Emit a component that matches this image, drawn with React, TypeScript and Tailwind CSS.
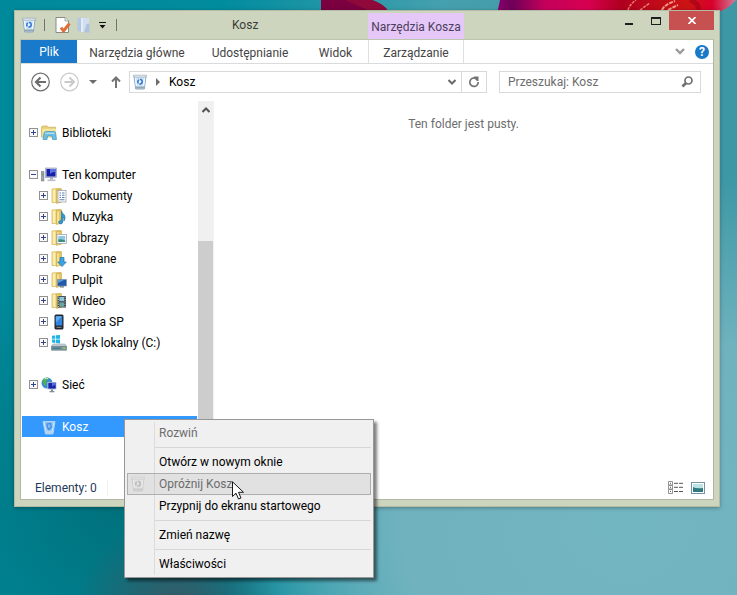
import { useState } from "react";
import type { ReactNode } from "react";
import clsx from "clsx";

type TreeItem = {
  name: string;
  icon: ReactNode;
  level: number;
  open?: boolean;
  selected?: boolean;
  gap?: boolean;
};

function BinIcon({ faded = false }: { faded?: boolean }) {
  return (
    <svg width="16" height="16" viewBox="0 0 16 16" className={clsx("shrink-0", faded && "opacity-35 grayscale")}>
      <path d="M2 2.500 L14 2.500 L12.300 15 L3.700 15 Z" fill="#cfe2f1" stroke="#86a3ba" strokeWidth="0.900" />
      <path d="M3.700 12.500 L12.300 12.500 L12 14.600 L4 14.600 Z" fill="#93a9b8" />
      <path d="M3.400 4 L4.400 12 M12.600 4 L11.600 12" stroke="#f3f9fd" strokeWidth="1.200" />
      <path d="M1.500 1.200 L14.500 1.200 L14.200 3 L1.800 3 Z" fill="#f7fbfd" stroke="#8fa5b5" strokeWidth="0.700" />
      <circle cx="8" cy="7.800" r="2.200" fill="#e6f1fb" stroke="#2d74d6" strokeWidth="1.500" strokeDasharray="3.700 0.900" />
    </svg>
  );
}

function SelectedBinIcon() {
  return (
    <svg width="16" height="16" viewBox="0 0 16 16" className="shrink-0">
      <path d="M2 2.500 L14 2.500 L12 15 L4.500 15 Z" fill="#8fc3f3" stroke="#bcdcf8" strokeWidth="0.800" />
      <path d="M3 3 L5.500 14 M13 3 L10.800 14" stroke="#cfe6fa" strokeWidth="1" />
      <path d="M6 5 L9.500 4.500 L10.500 8 L8 10.500 L6.500 8.500 Z" fill="#7db8f0" stroke="#3d8ee6" strokeWidth="1.200" />
      <path d="M5 12 L11.300 12 L11 14.500 L5.400 14.500 Z" fill="#b9d3ea" />
    </svg>
  );
}

function Folder({ children }: { children?: ReactNode }) {
  return (
    <svg width="16" height="16" viewBox="0 0 16 16" className="shrink-0">
      <path d="M1 1 L9.500 0.500 L10 14 L1 14.500 Z" fill="#f1d87e" stroke="#cfae4c" strokeWidth="0.700" />
      <path d="M5.500 1.500 L10.500 0.800 L10.500 14 L5.500 15.500 Z" fill="#e5c766" stroke="#c9a847" strokeWidth="0.600" />
      <path d="M3 1.500 L3 14" stroke="#fbeeb5" strokeWidth="2.400" />
      <path d="M7 2.500 L7 14.500" stroke="#f8e7a0" strokeWidth="1.600" />
      {children}
    </svg>
  );
}

function LibrariesIcon() {
  return (
    <svg width="16" height="16" viewBox="0 0 16 16" className="shrink-0">
      <path d="M0.500 2 L1.500 1 L6 1 L7 2.200 L14.500 2.200 L14.500 12 L0.500 12 Z" fill="#e6cf7e" stroke="#c9ad54" strokeWidth="0.700" />
      <path d="M1 3.800 L15 3.800 L14.500 12.500 L1.500 12.500 Z" fill="#f5e59d" />
      <path d="M2 14.500 L3 8.500 Q3.300 6.500 5 6.500 L13 6.500 Q14.500 6.500 14.700 8.500 L15.500 14.500 L11.500 14.500 L11 11 L6.500 11 L6 14.500 Z" fill="#6dbfe2" stroke="#3f94bd" strokeWidth="0.700" />
      <path d="M4 8.200 L13.500 8.200" stroke="#c9ecf8" strokeWidth="1" />
    </svg>
  );
}

function ComputerIcon() {
  return (
    <svg width="16" height="16" viewBox="0 0 16 16" className="shrink-0">
      <rect x="0.300" y="4.500" width="2.700" height="9.500" fill="#9da3a8" stroke="#777d84" strokeWidth="0.500" />
      <rect x="1" y="6.500" width="1.200" height="2" fill="#57b847" />
      <rect x="4.500" y="1" width="11" height="9.500" fill="#c8cbe0" stroke="#8d91b0" strokeWidth="0.600" />
      <rect x="5.500" y="2" width="9" height="7.500" fill="#1420a8" />
      <path d="M9 2 L14.500 2 L14.500 5 Q11 4.500 9 7 Z" fill="#5b72e6" />
      <rect x="9" y="10.500" width="3" height="2" fill="#a5a9bb" />
      <rect x="6.500" y="12.500" width="8" height="1.600" fill="#b9bccb" />
    </svg>
  );
}

function NetworkIcon() {
  return (
    <svg width="16" height="16" viewBox="0 0 16 16" className="shrink-0">
      <circle cx="6" cy="6" r="5.500" fill="#3b8fd0" />
      <path d="M1 4 Q3 0.500 6.500 0.600 L8 2 L5 4.500 L6 6.500 L3.500 9 L2.500 6 Z" fill="#4fae5b" />
      <path d="M3.500 2 Q5 1 7 1.500" stroke="#d2f0d5" strokeWidth="1" fill="none" />
      <rect x="6.500" y="5" width="9" height="7.500" fill="#c3c8df" />
      <rect x="7.300" y="5.800" width="7.400" height="5.800" fill="#1724a6" />
      <path d="M11 5.800 L14.700 5.800 L14.700 8 Q12 8 11 10 Z" fill="#556ee0" />
      <rect x="10" y="12.500" width="2" height="1.500" fill="#7c819b" />
      <rect x="8.500" y="14" width="5" height="1.300" fill="#7a9a9c" />
    </svg>
  );
}

function PhoneIcon() {
  return (
    <svg width="16" height="16" viewBox="0 0 16 16" className="shrink-0">
      <rect x="3.500" y="0.500" width="9" height="15" rx="1.500" fill="#22262c" />
      <rect x="4.800" y="2.200" width="6.400" height="9.300" fill="#2e86e0" />
      <path d="M4.800 2.200 L11.200 2.200 L4.800 8.500 Z" fill="#61acf0" />
      <path d="M5.500 13.300 L10.500 13.300" stroke="#8d949c" strokeWidth="1" />
    </svg>
  );
}

function DiskIcon() {
  return (
    <svg width="16" height="16" viewBox="0 0 16 16" className="shrink-0">
      <path d="M1 0.800 L4.300 0.400 L4.300 3.800 L1 3.800 Z M5 0.300 L9 0 L9 3.800 L5 3.800 Z M1 4.500 L4.300 4.500 L4.300 8 L1 7.600 Z M5 4.500 L9 4.500 L9 8.500 L5 8 Z" fill="#1fb4e4" />
      <path d="M2 9 L14 9 L15.700 11.500 L0.300 11.500 Z" fill="#c9d2d8" stroke="#8b979f" strokeWidth="0.500" />
      <rect x="0.300" y="11.300" width="15.400" height="4" rx="0.500" fill="#7d929c" stroke="#5e727c" strokeWidth="0.500" />
      <path d="M1.500 13.300 L9.500 13.300" stroke="#3f7f93" strokeWidth="1.400" />
      <rect x="12" y="12.500" width="2.400" height="1.500" fill="#7be04c" />
    </svg>
  );
}

const tree: TreeItem[] = [
  { name: "Biblioteki", level: 0, icon: <LibrariesIcon /> },
  { name: "Ten komputer", level: 0, open: true, gap: true, icon: <ComputerIcon /> },
  {
    name: "Dokumenty",
    level: 1,
    icon: (
      <Folder>
        <rect x="7" y="2.500" width="8" height="11.500" fill="#fff" stroke="#8798a8" strokeWidth="0.700" />
        <path d="M8.500 5 H10 M11 5 H13.500 M8.500 7.200 H10 M11 7.200 H13.500 M8.500 9.500 H10 M11 9.500 H13.500 M8.500 11.800 H13.500" stroke="#557fae" strokeWidth="1.100" />
      </Folder>
    ),
  },
  {
    name: "Muzyka",
    level: 1,
    icon: (
      <Folder>
        <path d="M10.500 2 Q11 4.500 13.500 6 Q15 9 13 12 Q13.300 9 11.900 8 L11.900 13 Q11.500 15.500 8.500 14.800 Q6.500 13 8.700 11.800 L10.300 11.600 Z" fill="#2f9bd2" stroke="#1f6f9f" strokeWidth="0.600" />
      </Folder>
    ),
  },
  {
    name: "Obrazy",
    level: 1,
    icon: (
      <Folder>
        <rect x="6" y="4.500" width="9.500" height="9" fill="#fff" stroke="#8b9ba8" strokeWidth="0.700" />
        <rect x="7.300" y="6" width="6.900" height="6" fill="#8cc8e2" />
        <path d="M7.300 12 L7.300 9.500 Q10 8.500 14.200 10.500 L14.200 12 Z" fill="#3d8f79" />
      </Folder>
    ),
  },
  {
    name: "Pobrane",
    level: 1,
    icon: (
      <Folder>
        <path d="M9 6.500 L13 6.500 L13 11 L15.300 11 L11 15.600 L6.700 11 L9 11 Z" fill="#3ea4e0" stroke="#1e71b0" strokeWidth="0.700" />
      </Folder>
    ),
  },
  {
    name: "Pulpit",
    level: 1,
    icon: (
      <Folder>
        <rect x="6.500" y="7.500" width="9" height="6.500" fill="#2358a8" stroke="#7e93b3" strokeWidth="0.600" />
        <path d="M7 8 L13 8 L7 11 Z" fill="#5f9ce2" />
        <rect x="9" y="14.300" width="4" height="1.200" fill="#66758a" />
      </Folder>
    ),
  },
  {
    name: "Wideo",
    level: 1,
    icon: (
      <Folder>
        <rect x="6.500" y="3" width="8.500" height="11.500" fill="#343a41" />
        <rect x="8.300" y="3.800" width="4.900" height="4.500" fill="#8ec3d8" />
        <rect x="8.300" y="9.300" width="4.900" height="4.500" fill="#6aa6a0" />
        <path d="M7.400 3.500 V14 M14.100 3.500 V14" stroke="#d7dde2" strokeWidth="0.900" strokeDasharray="1.200 1.200" />
      </Folder>
    ),
  },
  { name: "Xperia SP", level: 1, icon: <PhoneIcon /> },
  { name: "Dysk lokalny (C:)", level: 1, icon: <DiskIcon /> },
  { name: "Sieć", level: 0, gap: true, icon: <NetworkIcon /> },
  { name: "Kosz", level: 0, gap: true, selected: true, icon: <SelectedBinIcon /> },
];

const menuGroups = [
  [{ label: "Rozwiń", disabled: true }],
  [
    { label: "Otwórz w nowym oknie" },
    { label: "Opróżnij Kosz", disabled: true, active: true },
    { label: "Przypnij do ekranu startowego" },
  ],
  [{ label: "Zmień nazwę" }],
  [{ label: "Właściwości" }],
];

function Wallpaper() {
  return (
    <svg className="absolute top-0 right-0" width="420" height="24" viewBox="317 0 420 24" aria-hidden="true">
      <defs>
        <linearGradient id="petal" x1="0" x2="1">
          <stop offset="0" stopColor="#8a0070" />
          <stop offset="0.060" stopColor="#6d0058" />
          <stop offset="0.200" stopColor="#c4005c" />
          <stop offset="0.380" stopColor="#d80050" />
          <stop offset="0.520" stopColor="#b00020" />
          <stop offset="0.800" stopColor="#cc1414" />
          <stop offset="0.900" stopColor="#d8002c" />
          <stop offset="1" stopColor="#cf7c98" />
        </linearGradient>
      </defs>
      <path d="M321 0 H372 Q384 4 389 12 H321 Z" fill="#7a0040" />
      <path d="M345 0 H372 Q384 4 389 12 H372 Z" fill="#8f0a3a" />
      <path d="M500 0 H736 Q728 10 712 14 H497 Z" fill="url(#petal)" />
      <path d="M628 10 Q630 4 636 0 M640 10 L650 3" stroke="#f0806c" strokeWidth="1.500" fill="none" strokeDasharray="3 1" />
      <path d="M662 10 Q664 5 675 1 M668 10 L678 5" stroke="#f59a86" strokeWidth="2" fill="none" strokeDasharray="4 1" />
      <path d="M690 0 Q700 4 698 10" stroke="#a00018" strokeWidth="5" fill="none" opacity="0.600" />
    </svg>
  );
}

function TitleBar() {
  return (
    <header className="flex h-7 items-start">
      <div className="flex h-full w-[348px] items-center pl-px">
        <BinIcon />
        <span className="ml-[7px] h-3 w-px bg-[#6f7468]" />
        <button aria-label="Właściwości" className="ml-[10px]">
          <svg width="16" height="16" viewBox="0 0 16 16">
            <path d="M1 0.500 H10 L13.500 4 V15.500 H1 Z" fill="#fff" stroke="#7d817c" strokeWidth="0.900" />
            <path d="M10 0.500 V4 H13.500" fill="#e5e8e8" stroke="#8b8f8a" strokeWidth="0.700" />
            <path d="M6 10.500 L8.500 14 L14.500 6.500" fill="none" stroke="#e0703a" strokeWidth="3" />
          </svg>
        </button>
        <button aria-label="Nowy folder" className="ml-[6px]">
          <svg width="14" height="16" viewBox="0 0 14 16">
            <path d="M0.500 1 L5 0.500 L5 15 L0.500 14 Z" fill="#b4c8e3" />
            <path d="M4 1 L12 1 L12 15 L4 15 Z" fill="#d0def0" />
            <path d="M9.500 7 L12.500 6.500 L12.500 15.500 L7 15.500 Z" fill="#aec3e0" />
            <path d="M5 1 V15" stroke="#f0f6fb" strokeWidth="1.200" />
          </svg>
        </button>
        <button aria-label="Dostosuj pasek narzędzi Szybki dostęp" className="ml-[8px]">
          <svg width="7" height="7" viewBox="0 0 7 7">
            <path d="M0 0 H7 V1 H0 Z M0.500 3 H6.500 L3.500 6.500 Z" fill="#111" />
          </svg>
        </button>
        <span className="ml-[10px] h-3 w-px bg-[#6f7468]" />
        <h1 className="ml-[115px] text-[#3b3d38]">Kosz</h1>
      </div>
      <div className="mt-[2px] flex h-[26px] w-[96px] items-center justify-center bg-[#e6c8f8] pt-[2px] whitespace-nowrap text-[#4a3f5c]">
        Narzędzia Kosza
      </div>
      <div className="ml-auto flex">
        <button aria-label="Minimalizuj" className="flex h-5 w-[27px] items-center justify-center">
          <span className="mt-[5px] h-[2px] w-2 bg-[#1e1e1e]" />
        </button>
        <button aria-label="Maksymalizuj" className="flex h-5 w-[27px] items-center justify-center">
          <span className="h-[8px] w-[10px] border border-t-2 border-[#1e1e1e]" />
        </button>
        <button aria-label="Zamknij" className="flex h-[19px] w-[45px] items-center justify-center bg-[#c75050]">
          <svg width="8" height="7" viewBox="0 0 8 7">
            <path d="M0.500 0 L7.500 7 M7.500 0 L0.500 7" stroke="#fff" strokeWidth="1.700" />
          </svg>
        </button>
      </div>
    </header>
  );
}

function Ribbon() {
  return (
    <nav className="flex h-6 border-b border-[#dadbdc] text-[#444]">
      <button className="w-[56px] bg-[#1979ca] text-white">Plik</button>
      <button className="w-[120px] pt-[2px] whitespace-nowrap">Narzędzia główne</button>
      <button className="w-[106px] pt-[2px]">Udostępnianie</button>
      <button className="w-[65px] pt-[2px]">Widok</button>
      <button className="w-[96px] border-x border-[#dfdfdf] pt-[2px]">Zarządzanie</button>
      <div className="ml-auto flex items-center gap-[10px] pr-[4px]">
        <button aria-label="Rozwiń wstążkę">
          <svg width="10" height="7" viewBox="0 0 10 7">
            <path d="M1 1 L5 5 L9 1" fill="none" stroke="#9a9a9a" strokeWidth="2.400" />
          </svg>
        </button>
        <button aria-label="Pomoc" className="flex size-[14px] items-center justify-center rounded-full bg-[#1a78c8] text-[12px] font-bold text-white">
          ?
        </button>
      </div>
    </nav>
  );
}

function AddressBar() {
  const [query, setQuery] = useState("");

  return (
    <div className="flex h-9 items-center pr-3 pl-[10px]">
      <button aria-label="Wstecz">
        <svg width="20" height="20" viewBox="0 0 20 20" fill="none" stroke="#6e6e6e">
          <circle cx="9.500" cy="10" r="8.800" strokeWidth="1.200" />
          <path d="M15 10 H6 M9.500 5.500 L5 10 L9.500 14.500" strokeWidth="2.200" />
        </svg>
      </button>
      <button aria-label="Dalej" className="ml-[9px]">
        <svg width="20" height="20" viewBox="0 0 20 20" fill="none" stroke="#cacaca">
          <circle cx="9.500" cy="10" r="8.800" strokeWidth="1.200" />
          <path d="M4.500 10 H13 M9.500 5.500 L14 10 L9.500 14.500" strokeWidth="2" />
        </svg>
      </button>
      <button aria-label="Ostatnie lokalizacje" className="ml-[9px]">
        <svg width="8" height="4" viewBox="0 0 8 4">
          <path d="M0 0 H8 L4 4 Z" fill="#6d6d6d" />
        </svg>
      </button>
      <button aria-label="W górę" className="ml-[14px]">
        <svg width="10" height="12" viewBox="0 0 10 12" fill="none" stroke="#747474" strokeWidth="2">
          <path d="M5 12 V1.500 M1 5.500 L5 1.500 L9 5.500" />
        </svg>
      </button>
      <div className="ml-2 flex h-[22px] flex-1 items-center border border-[#d9d9d9] pl-[2px]">
        <BinIcon />
        <svg width="4" height="8" viewBox="0 0 4 8" className="ml-2">
          <path d="M0 0 L4 4 L0 8 Z" fill="#6d6d6d" />
        </svg>
        <span className="ml-[9px] text-black">Kosz</span>
        <button aria-label="Poprzednie lokalizacje" className="mr-[5px] ml-auto">
          <svg width="8" height="6" viewBox="0 0 8 6">
            <path d="M0.500 1 L4 4.500 L7.500 1" fill="none" stroke="#6a6a6a" strokeWidth="2" />
          </svg>
        </button>
        <button aria-label="Odśwież" className="flex h-full w-[25px] items-center justify-center border-l border-[#d9d9d9]">
          <svg width="12" height="12" viewBox="0 0 12 12">
            <path d="M8 2.500 A4.200 4.200 0 1 0 10.200 6" fill="none" stroke="#747474" strokeWidth="1.700" />
            <path d="M6 0 L6 0.500 L10.500 0.500 L10.500 5 L9 5 L6 2 Z" fill="#747474" />
          </svg>
        </button>
      </div>
      <form role="search" className="ml-3 flex h-[22px] w-[202px] items-center border border-[#d9d9d9] pr-[7px] pl-2">
        <input
          aria-label="Przeszukaj: Kosz"
          placeholder="Przeszukaj: Kosz"
          value={query}
          onChange={(e) => setQuery(e.target.value)}
          className="min-w-0 flex-1 outline-none placeholder:text-[#6d6d6d]"
        />
        <svg width="12" height="12" viewBox="0 0 12 12" fill="none" stroke="#707070">
          <circle cx="7.500" cy="4.500" r="3.500" strokeWidth="1.700" />
          <path d="M5 7 L1.500 10.500" strokeWidth="2.600" />
        </svg>
      </form>
    </div>
  );
}

function TreeRow({ item }: { item: TreeItem }) {
  return (
    <li
      className={clsx(
        "flex h-[21px] items-center",
        item.gap && "mt-[21px]",
        item.level === 0 ? "pl-[7px]" : "pl-[17px]",
        item.selected ? "bg-[#3399ff] text-white" : "text-black"
      )}
    >
      {item.selected ? (
        <span className="w-[9px]" />
      ) : (
        <button aria-label={`${item.open ? "Zwiń" : "Rozwiń"} ${item.name}`}>
          <svg width="9" height="9" viewBox="0 0 9 9">
            <rect x="0.500" y="0.500" width="8" height="8" fill="#fafafa" stroke="#919191" />
            <path d={item.open ? "M2 4.500 H7" : "M2 4.500 H7 M4.500 2 V7"} stroke="#32448f" />
          </svg>
        </button>
      )}
      <span className="ml-[3px] flex">{item.icon}</span>
      <span className="ml-[5px] whitespace-nowrap">{item.name}</span>
    </li>
  );
}

function ContextMenu() {
  return (
    <div
      role="menu"
      className="absolute top-[419px] left-[124px] w-[250px] border border-[#979797] bg-[#f0f0f0] p-[2px] shadow-[3px_3px_3px_rgba(0,0,0,0.5)]"
    >
      <div className="bg-[linear-gradient(#dcdcdc,#dcdcdc)] bg-[length:1px_100%] bg-[position:27px_0] bg-no-repeat">
        {menuGroups.map((group, index) => (
          <div key={index}>
            {index > 0 && <div className="my-[3px] ml-7 h-px bg-[#d7d7d7]" />}
            {group.map((entry) => (
              <button
                key={entry.label}
                role="menuitem"
                aria-disabled={entry.disabled}
                className={clsx(
                  "flex h-[22px] w-full items-center border text-left whitespace-nowrap",
                  entry.active ? "border-[#aeaeae] bg-black/6" : "border-transparent",
                  entry.disabled ? "text-[#6d6d6d]" : "text-black"
                )}
              >
                <span className="w-[31px] pl-[2px]">{entry.active && <BinIcon faded />}</span>
                {entry.label}
              </button>
            ))}
          </div>
        ))}
      </div>
    </div>
  );
}

export default function App() {
  return (
    <main className="relative min-h-screen overflow-hidden bg-[radial-gradient(ellipse_14%_16%_at_24%_103%,#3b5561_0%,transparent_100%),radial-gradient(ellipse_55%_60%_at_85%_88%,#72b6c2_0%,#70b3bf_55%,transparent_100%),radial-gradient(ellipse_30%_40%_at_16%_85%,#00717c_0%,transparent_100%),linear-gradient(90deg,#00899a_0%,#008c9e_30%,#45a0ae_60%,#3d97a5_100%)] pt-[10px] pr-[17px] pl-[14px] font-['Roboto',sans-serif] text-[12px] leading-4">
      <Wallpaper />
      <div className="relative border border-[#b3bba6] bg-[#cdd5bf] px-[5px] pb-[6px] shadow-[0_1px_4px_rgba(0,0,0,0.3)]">
        <TitleBar />
        <div className="border border-[#b0b8a4] border-t-[#bcc4b0] bg-white">
          <Ribbon />
          <AddressBar />
          <div className="flex pt-px">
            <aside className="flex w-[193px] border-r border-[#f2f2f2] pl-px">
              <ul className="flex-1 pt-[21px] pb-[39px]">
                {tree.map((item) => (
                  <TreeRow key={item.name} item={item} />
                ))}
              </ul>
              <div className="flex w-[16px] flex-col border-l border-white bg-[#f0f0f0]">
                <button aria-label="Przewiń w górę" className="flex h-[18px] items-center justify-center">
                  <svg width="8" height="6" viewBox="0 0 8 6">
                    <path d="M0.500 5 L4 1.500 L7.500 5" fill="none" stroke="#505050" strokeWidth="2" />
                  </svg>
                </button>
                <div className="mt-[122px] flex-1 bg-[#cdcdcd]" />
              </div>
            </aside>
            <section className="flex-1 pt-[15px] text-center text-[#6d6d6d]">Ten folder jest pusty.</section>
          </div>
          <footer className="flex h-[23px] items-center pr-2 pl-[14px] text-[#1e395b]">
            <span>Elementy: 0</span>
            <span className="ml-[10px] h-4 w-px bg-[#f0f0f0]" />
            <button aria-label="Szczegóły" className="ml-auto">
              <svg width="15" height="13" viewBox="0 0 15 13">
                <path d="M0.500 0.500 H4.500 V4 H0.500 Z M0.500 4.500 H4.500 V8 H0.500 Z M0.500 8.500 H4.500 V12.500 H0.500 Z" fill="#fff" stroke="#777" strokeWidth="0.800" />
                <path d="M2 2.300 H3 M2 6.300 H3 M2 10.500 H3 M6 2.300 H10 M11 2.300 H15 M6 6.300 H10 M11 6.300 H15 M6 10.500 H10 M11 10.500 H15" stroke="#555" />
              </svg>
            </button>
            <button aria-label="Duże ikony" className="ml-2">
              <svg width="14" height="12" viewBox="0 0 14 12">
                <rect x="0.500" y="0.500" width="13" height="11" fill="#fff" stroke="#7693a3" />
                <rect x="2" y="2" width="10" height="8" fill="#b9e3e6" />
                <path d="M2 5 Q5 7 12 6 V10 H2 Z" fill="#2e7a80" />
              </svg>
            </button>
          </footer>
        </div>
      </div>
      <ContextMenu />
      <svg width="13" height="20" viewBox="0 0 13 20" className="pointer-events-none absolute top-[481px] left-[232px]" aria-hidden="true">
        <path d="M0.500 0.800 V15.500 L4 12.200 L6.500 18 L9 17 L6.500 11.300 L11.500 11.300 Z" fill="#fff" stroke="#000" strokeWidth="0.900" />
      </svg>
    </main>
  );
}
